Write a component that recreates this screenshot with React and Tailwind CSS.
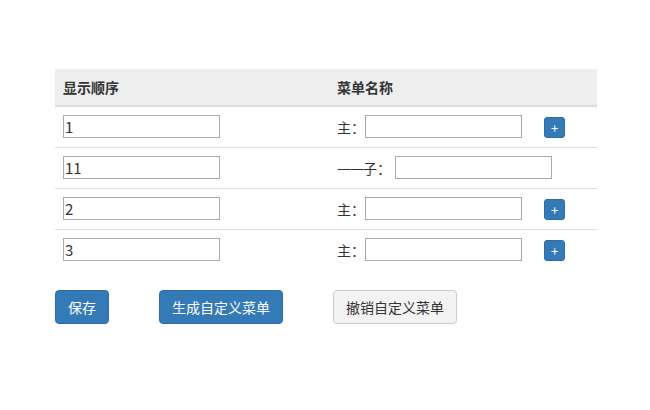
import React from "react";

const rows = [
  { order: "1", label: "主：", child: false },
  { order: "11", label: "子：", child: true },
  { order: "2", label: "主：", child: false },
  { order: "3", label: "主：", child: false },
];

const font = { fontFamily: '"Noto Sans CJK SC", "Liberation Sans", sans-serif' };

const App = () => {
  return (
    <div className="w-[650px] h-[410px] bg-white text-[#333] text-[14px]" style={font}>
      <div className="pt-[69px] px-[55px]">
        <table className="w-[542px] border-collapse">
          <thead>
            <tr className="bg-[#eeeeee]">
              <th className="w-[274px] h-[37px] px-2 text-left font-bold border-b-2 border-[#dddddd]">
                显示顺序
              </th>
              <th className="h-[37px] px-2 text-left font-bold border-b-2 border-[#dddddd]">
                菜单名称
              </th>
            </tr>
          </thead>
          <tbody>
            {rows.map((row, i) => (
              <tr key={i} className="border-b border-[#dddddd] last:border-b-0">
                <td className="h-[41px] px-2 align-middle">
                  <input
                    className="w-[157px] h-[23px] border border-[#a9a9a9] px-[1px] leading-[21px] text-[15px] text-[#333] outline-none"
                    defaultValue={row.order}
                  />
                </td>
                <td className="h-[41px] px-2 align-middle">
                  <div className="flex items-center">
                    {row.child && (
                      <span className="font-['DejaVu_Sans'] tracking-[-1px] leading-5 whitespace-nowrap">——</span>
                    )}
                    <span className={row.child ? "leading-5 mr-[4px]" : "leading-5"}>{row.label}</span>
                    <input className="w-[157px] h-[23px] border border-[#a9a9a9] outline-none" />
                    {!row.child && (
                      <button className="ml-[22px] mt-[2px] w-[21px] h-[21px] rounded-[3px] bg-[#337ab7] border border-[#2e6da4] text-white text-[13px] leading-none flex items-center justify-center">
                        +
                      </button>
                    )}
                  </div>
                </td>
              </tr>
            ))}
          </tbody>
        </table>
        <div className="flex gap-[50px] mt-[20px]">
          <button className="h-[34px] px-3 rounded-[4px] bg-[#337ab7] border border-[#2e6da4] text-white leading-5">
            保存
          </button>
          <button className="h-[34px] px-3 rounded-[4px] bg-[#337ab7] border border-[#2e6da4] text-white leading-5">
            生成自定义菜单
          </button>
          <button className="h-[34px] px-3 rounded-[4px] bg-[#f3f3f3] border border-[#cccccc] text-[#333] leading-5">
            撤销自定义菜单
          </button>
        </div>
      </div>
    </div>
  );
};

export default App;
